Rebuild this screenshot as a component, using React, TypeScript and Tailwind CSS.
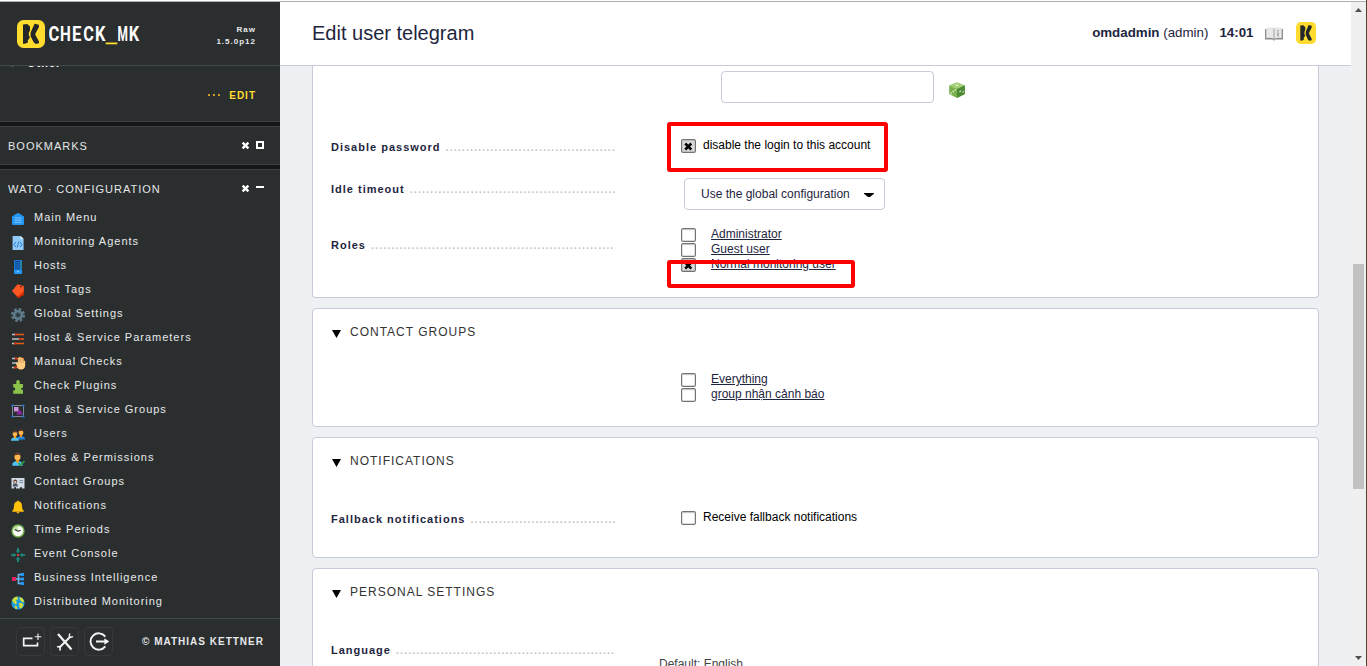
import type { ReactNode } from "react";

/* ---------- logo ---------- */

function LogoMark({ className }: { className: string }) {
  return (
    <svg className={className} viewBox="0 0 28 28" preserveAspectRatio="none">
      <rect width="28" height="28" rx="6.5" fill="#ffdc2e" />
      <path
        d="M6 4.500 10.200 4 13 6.600V10.500L11.800 12.400V15.500L13 17.200 10.800 20.500V22.800L6.600 24 6 23.400Z"
        fill="#232727"
      />
      <path
        d="M17.600 3.800 21.800 4.800 22 7 18.400 13.400V15L22 21.600V23.200L18.800 24 16.800 22.600 13.600 16.200V12.600Z"
        fill="#232727"
      />
    </svg>
  );
}

const LETTERS: [string, number, number][] = [
  ["C", -0.6, 10.8],
  ["H", 11.1, 10.8],
  ["E", 23.1, 9.4],
  ["C", 34.3, 10.6],
  ["K", 45.9, 10.4],
  ["M", 68.5, 10.4],
  ["K", 79.8, 10.4],
];

function WordMark() {
  return (
    <svg className="ml-1 h-7 w-[92px] shrink-0" viewBox="0 0 92 28" fontFamily="Roboto, sans-serif" fontWeight="700" fontSize="20" fill="#ffffff">
      {LETTERS.map(([c, x, w], i) => (
        <text key={i} x={x} y="21.300" textLength={w} lengthAdjust="spacingAndGlyphs">
          {c}
        </text>
      ))}
      <rect x="56.700" y="22.500" width="11.600" height="1.800" fill="#ffdc2e" />
    </svg>
  );
}

/* ---------- sidebar icons ---------- */

const sliders = (
  <>
    <path d="M2 3.500h3M2 8h8M2 12.500h3" stroke="#b9c4c8" strokeWidth="1.600" />
    <path d="M5 3.500h9M10 8h4M5 12.500h9" stroke="#e65c1a" strokeWidth="1.300" />
    <path d="M5 2.500h2v2H5zM9 7h2v2H9zM4 11.500h2v2H4z" fill="#d32f0f" />
  </>
);

const person = (x: number, y: number, body: string) => (
  <g transform={`translate(${x} ${y})`}>
    <path d="M0 11Q0 7.400 4 7.400T8 11Z" fill={body} />
    <path d="M3 5h2v3l-1 1-1-1z" fill="#ff9800" />
    <ellipse cx="4" cy="4" rx="2.300" ry="2.800" fill="#ffb74d" />
    <path d="M1.600 3.600Q1.400.6 4 .6t2.400 3L5.400 2.400 2.600 2.600z" fill="#5a3a30" />
  </g>
);

const ITEMS: [string, ReactNode][] = [
  [
    "Main Menu",
    <>
      <path d="M8 1.800 14 5.600V13a1 1 0 0 1-1 1H3a1 1 0 0 1-1-1V5.600z" fill="#2196f3" />
      <path d="M4.500 7h7M4.500 9.200h7M4.500 11.400h7" stroke="#90caf9" strokeWidth=".9" />
    </>,
  ],
  [
    "Monitoring Agents",
    <>
      <path d="M2.600 1h8l3 3v11h-11z" fill="#90caf9" />
      <path d="M10.600 1v3h3z" fill="#e1f5fe" />
      <path d="M6 7 4 9.500 6 12M10 7l2 2.500L10 12M8.800 6.500l-1.600 6" stroke="#1976d2" strokeWidth=".9" fill="none" />
    </>,
  ],
  [
    "Hosts",
    <>
      <path d="M4 1h8v14H4z" fill="#1976d2" />
      <path d="M4 11h8v4H4z" fill="#2196f3" />
      <path d="M5 2.700h5M5 4.900h5M5 7.100h5M5 9.300h5" stroke="#0d3c70" strokeWidth=".9" />
      <path d="M11 2v8" stroke="#388e7a" strokeWidth="1" />
      <circle cx="8" cy="12.600" r=".8" fill="#bbdefb" />
    </>,
  ],
  [
    "Host Tags",
    <>
      <path d="M7.500 1.200 13.800 3v6L8 14.800 2 8z" fill="#ff5722" />
      <path d="M13.900 8v4L8.400 15 6 12.400 8.500 13z" fill="#d92d06" />
      <circle cx="11" cy="3.600" r=".9" fill="#5d2415" />
    </>,
  ],
  [
    "Global Settings",
    <>
      <circle cx="8" cy="8" r="5.800" fill="none" stroke="#607d8b" strokeWidth="2.400" strokeDasharray="2.550 2.005" />
      <circle cx="8" cy="8" r="5" fill="#607d8b" />
      <circle cx="8" cy="8" r="2.800" fill="#3f5560" />
      <circle cx="8" cy="8" r="1.500" fill="#2b3032" />
    </>,
  ],
  ["Host & Service Parameters", sliders],
  [
    "Manual Checks",
    <>
      {sliders}
      <path
        d="M5.600 7.800Q5.800 6.800 6.800 7.400L7.900 8.600V3.400Q8.500 2.400 9.200 3.300V2.300Q9.900 1.300 10.700 2.300V2.800Q11.500 2 12.200 3V3.900Q13 3.200 13.700 4.200V5.600Q14.600 5 15.200 6V10.200Q15 14.600 10.900 14.600 8.600 14.600 7.400 12.400Z"
        fill="#ffcc80"
      />
      <path d="M9.200 3.800v4M10.700 3.400v4.200M12.200 3.800v4M13.700 5v3" stroke="#b9793a" strokeWidth=".4" />
    </>,
  ],
  [
    "Check Plugins",
    <path
      d="M3.200 5h3.200Q5.600 1 8 1t1.600 4H13v4q-1.800-.6-1.800.8T13 10.800v3.900H3.200v-3.500Q5.200 12 5.200 9.900T3.200 8.600z"
      fill="#8bc34a"
    />,
  ],
  [
    "Host & Service Groups",
    <>
      <rect x="2.500" y="2.500" width="11" height="11" fill="none" stroke="#7b8791" strokeWidth="1" />
      <rect x="4" y="4" width="4.500" height="4.500" fill="#ce93d8" />
      <path d="M9.500 6.500 13 11.500H6z" fill="#8e24aa" />
      <path d="M1.500 1.500h2v2h-2zM12.500 1.500h2v2h-2zM1.500 12.500h2v2h-2zM12.500 12.500h2v2h-2z" fill="#1976d2" />
    </>,
  ],
  [
    "Users",
    <>
      {person(7, 1.5, "#1e88e5")}
      {person(1, 2.8, "#4fc3f7")}
    </>,
  ],
  [
    "Roles & Permissions",
    <>
      <g transform="translate(2.200 .6) scale(1.320 1.280)">{person(0, 0, "#4fc3f7")}</g>
      <path d="m8.500 12 2 2L14.500 10" stroke="#2e9d46" strokeWidth="1.700" fill="none" />
    </>,
  ],
  [
    "Contact Groups",
    <>
      <path d="M1.500 3h13v10.500H12v-1.300h-2v1.300H6v-1.300H4v1.300H1.500z" fill="#cfdae6" />
      <path d="M2.500 11.500 3.500 8.500H7l1 3z" fill="#455a64" />
      <circle cx="5.200" cy="6.500" r="1.900" fill="#5d4037" />
      <circle cx="5.200" cy="7" r="1.100" fill="#ffccbc" />
      <path d="M9.500 5.500H13M9.500 7.500H13" stroke="#78909c" strokeWidth="1" />
    </>,
  ],
  [
    "Notifications",
    <>
      <path d="M7 2.500Q8 .6 9 2.500q3 .6 3 4.500 0 3.500 1.800 5v.8H2.200V12Q4 10.500 4 7q0-3.900 3-4.500z" fill="#ffc107" />
      <path d="M6.500 12.800h3q0 1.700-1.500 1.700t-1.500-1.700z" fill="#f9a825" />
    </>,
  ],
  [
    "Time Periods",
    <>
      <circle cx="8" cy="8" r="6.700" fill="#6cab45" />
      <circle cx="8" cy="8" r="5.300" fill="#f7faf5" />
      <path d="M8 8V2.700A5.300 5.300 0 0 0 3 6.500z" fill="#c5e1a5" />
      <path d="M4.800 6.500 8 8.200l2.600-.8" stroke="#263238" strokeWidth="1.100" fill="none" />
    </>,
  ],
  [
    "Event Console",
    <>
      <path d="M8 1v4M8 11v4M1 8h4M11 8h4" stroke="#1f9688" strokeWidth="1.700" />
      <path d="M5.700 3.600h4.600L8 6.400zM5.700 12.400h4.600L8 9.600zM3.600 5.700v4.600L6.400 8zM12.400 5.700v4.600L9.600 8z" fill="#1b8a7c" />
      <rect x="7" y="7" width="2" height="2" fill="#e53935" />
    </>,
  ],
  [
    "Business Intelligence",
    <>
      <path d="M5 8h7M12 3.500H8.500v9H12" stroke="#6fb2e6" strokeWidth="1.700" fill="none" />
      <rect x="2" y="6" width="3.800" height="4" fill="#e91e63" />
      <path d="M10.500 2h3.500v3h-3.500zM10.500 6.500h3.500v3h-3.500zM10.500 11h3.500v3h-3.500z" fill="#2196f3" />
    </>,
  ],
  [
    "Distributed Monitoring",
    <>
      <circle cx="8" cy="8" r="6.600" fill="#1e9be0" />
      <path d="M2 5.500Q4 1.500 7.500 1.500L8 4 6 5.500 7 8 5.500 9.500 3.500 7.500zM9.500 2 12.500 3.300 14.300 6.500 12.800 7.500 11.500 6.500 10 5zM9 8h3l1.500 2-2 3.500-2-.8zM4.500 10.500 7 11.500 7.200 14.300 5 13.500z" fill="#cddc39" />
    </>,
  ],
];

/* ---------- sidebar ---------- */

function CloseX() {
  return (
    <svg className="h-[7px] w-[7px]" viewBox="0 0 7 7">
      <path d="M.6.6 6.400 6.400M6.400.6.6 6.400" stroke="#fff" strokeWidth="2.400" />
    </svg>
  );
}

function SnapinHead({ title, open }: { title: string; open?: boolean }) {
  return (
    <div className="flex h-3 items-start pl-2 pr-4 text-[11px] leading-[12px] tracking-[1px] text-[#e4e6e7]">
      <span className="grow">{title}</span>
      <span className="mt-[2px]">
        <CloseX />
      </span>
      {open ? (
        <span className="ml-[7px] mt-[3px] h-[2px] w-2 bg-white" />
      ) : (
        <span className="ml-[7px] mt-px h-2 w-2 border-2 border-white" />
      )}
    </div>
  );
}

function FootButton({ children }: { children: ReactNode }) {
  return (
    <button className="flex h-[29px] w-[29px] items-center justify-center rounded-[4px] border border-[#35393b]">
      <svg className="h-[22px] w-[22px] shrink-0" viewBox="0 0 22 22" fill="none" stroke="#f4f4f4">
        {children}
      </svg>
    </button>
  );
}

function Sidebar() {
  return (
    <aside className="flex w-[280px] shrink-0 flex-col bg-[#2a2e2f] text-[#e8e9ea]">
      <div className="flex h-16 shrink-0 border-b border-[#42474a] pl-[17px] pr-6 pt-[18px]">
        <LogoMark className="h-7 w-7 shrink-0" />
        <WordMark />
        <div className="mt-[4px] grow text-right text-[8px] font-bold leading-[12px] tracking-[1px]">
          Raw
          <br />
          1.5.0p12
        </div>
      </div>

      <div className="flex h-14 shrink-0 flex-col overflow-hidden border-b border-[#3b4042]">
        <div className="-mt-[9px] flex h-3 shrink-0 items-end pl-[11px] text-[11px] font-bold leading-[12px] tracking-[1px] text-white">
          <span className="mb-[2px] h-[2px] w-[3px] bg-[#4a5052]" />
          <span className="ml-[13px]">Other</span>
        </div>
        <div className="mt-[21px] flex justify-end pr-6 text-[10px] font-bold leading-[11px] tracking-[1px] text-[#ffdc2e]">
          <span className="mr-[9px] flex gap-[3px] pt-[4px]">
            <i className="h-[2px] w-[2px] bg-[#d69a24]" />
            <i className="h-[2px] w-[2px] bg-[#d69a24]" />
            <i className="h-[2px] w-[2px] bg-[#d69a24]" />
          </span>
          EDIT
        </div>
      </div>
      <div className="h-1 shrink-0 bg-[#141617]" />
      <div className="h-[39px] shrink-0 border-y border-[#3b4042] pt-[13px]">
        <SnapinHead title="BOOKMARKS" />
      </div>
      <div className="h-1 shrink-0 bg-[#141617]" />
      <div className="grow border-t border-[#3b4042] pt-[13px]">
        <SnapinHead title="WATO · CONFIGURATION" open />
        <ul className="mt-[10px]">
          {ITEMS.map(([label, icon]) => (
            <li key={label} className="flex h-6 items-start pl-[10px] text-[11px] leading-[24px] tracking-[1px]">
              <svg className="mt-[6px] h-4 w-4 shrink-0" viewBox="0 0 16 16">
                {icon}
              </svg>
              <span className="ml-2 whitespace-nowrap">{label}</span>
            </li>
          ))}
        </ul>
      </div>
      <footer className="flex h-12 shrink-0 items-start gap-[5px] border-t border-[#42474a] pl-4 pt-2">
        <FootButton>
          <path d="M12.500 7.400H3.700V14.700H17.500V11.500" strokeWidth="1.700" />
          <path d="M18 2.500v6.500M14.800 5.700H21.300" strokeWidth="1.100" />
        </FootButton>
        <FootButton>
          <path d="M4 3 17.500 18.500" strokeWidth="2.200" />
          <path d="M16.500 5.500 5 17" strokeWidth="2" />
          <path d="M15.800 2.500Q14.500 6.500 16.500 6.200T19 5.500M3 16Q6 14.500 6.300 16.500T5.500 19.500" strokeWidth="1.400" />
        </FootButton>
        <FootButton>
          <path d="M17.300 5.600A8.200 8.200 0 1 0 17.300 15.400M8 10.500h11.500" strokeWidth="1.900" />
          <path d="M16.400 7.300 21.200 10.500 16.400 13.700z" fill="#f4f4f4" stroke="none" />
        </FootButton>
        <span className="ml-[24px] mt-[9px] whitespace-nowrap text-[10px] font-bold leading-[11px] tracking-[1px]">
          © MATHIAS KETTNER
        </span>
      </footer>
    </aside>
  );
}

/* ---------- form ---------- */

function Checkbox({ checked, className }: { checked?: boolean; className: string }) {
  return (
    <svg className={`h-[14px] w-[15px] shrink-0 ${className}`} viewBox="0 0 15 14">
      <rect x=".6" y=".6" width="13.800" height="12.800" rx="1.500" fill={checked ? "#d9d9d9" : "#fff"} stroke="#727272" strokeWidth="1.200" />
      <path d="M1.500 1.700h12" stroke="#bdbdbd" strokeWidth=".8" />
      {checked && <path d="M4.200 4.500 10.300 10.700M10.300 4.500 4.200 10.700" stroke="#000" strokeWidth="2.600" />}
    </svg>
  );
}

function Label({ text, dots, className }: { text: string; dots: number; className: string }) {
  return (
    <div className={`h-3 whitespace-nowrap text-[11px] font-bold leading-[12px] tracking-[1px] text-[#1e2540] ${className}`}>
      {text} <span className="ml-px text-[#c4c4c4]">{".".repeat(dots)}</span>
    </div>
  );
}

function Options({ items, className }: { items: [string, boolean][]; className: string }) {
  return (
    <div className={className}>
      {items.map(([name, on]) => (
        <div key={name} className="flex h-[15px] items-start leading-[15px]">
          <Checkbox checked={on} className="mt-px" />
          <a className="ml-[15px] whitespace-nowrap text-[#1e2540] underline">{name}</a>
        </div>
      ))}
    </div>
  );
}

const ROW = "grid grid-cols-[350px_1fr] items-start pl-[18px]";

function PanelTitle({ children }: { children: string }) {
  return (
    <h2 className="flex h-[30px] items-start pl-[19px] pt-4 leading-[14px] tracking-[1px] text-[#333]">
      <svg className="mr-[9px] mt-[5px] h-2 w-[9px]" viewBox="0 0 9 8">
        <path d="M0 0h9L4.500 8z" fill="#000" />
      </svg>
      {children}
    </h2>
  );
}

function Dice() {
  return (
    <svg className="ml-[15px] mt-4 h-4 w-4" viewBox="0 0 16 16">
      <path d="M8 0.500 15.800 3.500V12L8 16 .2 12V3.500z" fill="#7ab04c" />
      <path d="M8 .5 15.800 3.500 8 7 .2 3.500z" fill="#a5d175" />
      <path d="M8 7 15.800 3.500V12L8 16z" fill="#4c8a35" />
      <path d="M7 2.800h2v1.200H7zM1.500 10l1.300.7v1.500l-1.300-.7zM3.600 8.500l1.300.6v1.400l-1.300-.6zM5.500 7l1.200.6V9l-1.200-.6zM10.500 9l1.300-.7v1.500l-1.300.7zM13.500 9.500l1.200-.7v1.400l-1.200.6z" fill="#eef8e2" />
    </svg>
  );
}

function Content() {
  return (
    <main className="flex grow flex-col overflow-hidden bg-[#edf1f4] pl-8 pr-8 text-[12px]">
      <section className="h-[232px] shrink-0 rounded-b-[4px] border border-t-0 border-[#c8cad9] bg-white">
        <div className={`${ROW} h-14`}>
          <span />
          <div className="flex items-start pl-10">
            <div className="mt-[5px] h-8 w-[213px] rounded-[4px] border border-[#c8cad9] bg-white" />
            <Dice />
          </div>
        </div>
        <div className={`${ROW} h-[50px]`}>
          <Label text="Disable password" dots={42} className="mt-[19px]" />
          <div className="flex items-start leading-[14px] text-black">
            <Checkbox checked className="mt-[17px]" />
            <span className="ml-[7px] mt-4">disable the login to this account</span>
          </div>
        </div>
        <div className={`${ROW} h-[49px]`}>
          <Label text="Idle timeout" dots={51} className="mt-[11px]" />
          <div className="ml-[3px] mt-[6px] flex h-8 w-[201px] items-start justify-between rounded-[4px] border border-[#c8cad9] pl-4 pr-[10px] leading-[14px] text-[#1e2540]">
            <span className="mt-2">Use the global configuration</span>
            <svg className="mt-[14px] h-1 w-[10px]" viewBox="0 0 10 4">
              <path d="M0 0h10v.8L6 4H4L0 .8z" fill="#000" />
            </svg>
          </div>
        </div>
        <div className={`${ROW} h-[76px]`}>
          <Label text="Roles" dots={60} className="mt-[18px]" />
          <Options
            className="mt-[6px]"
            items={[
              ["Administrator", false],
              ["Guest user", false],
              ["Normal monitoring user", true],
            ]}
          />
        </div>
      </section>

      <section className="mt-[10px] h-[119px] shrink-0 rounded-[4px] border border-[#c8cad9] bg-white">
        <PanelTitle>CONTACT GROUPS</PanelTitle>
        <div className={ROW}>
          <span />
          <Options
            className="mt-[33px]"
            items={[
              ["Everything", false],
              ["group nhận cảnh báo", false],
            ]}
          />
        </div>
      </section>

      <section className="mt-[10px] h-[121px] shrink-0 rounded-[4px] border border-[#c8cad9] bg-white">
        <PanelTitle>NOTIFICATIONS</PanelTitle>
        <div className={ROW}>
          <Label text="Fallback notifications" dots={36} className="mt-[45px]" />
          <div className="flex items-start leading-[14px] text-black">
            <Checkbox className="mt-[43px]" />
            <span className="ml-[7px] mt-[42px]">Receive fallback notifications</span>
          </div>
        </div>
      </section>

      <section className="mt-[10px] h-[121px] shrink-0 rounded-[4px] border border-[#c8cad9] bg-white">
        <PanelTitle>PERSONAL SETTINGS</PanelTitle>
        <div className={ROW}>
          <Label text="Language" dots={54} className="mt-[45px]" />
          <span className="-ml-[22px] mt-[58px] leading-[14px] text-[#444]">Default: English</span>
        </div>
      </section>
    </main>
  );
}

function TopBar() {
  return (
    <header className="flex h-16 shrink-0 items-start border-b border-[#c8cad9] bg-white pl-8 pr-[35px] text-[#1e2540]">
      <h1 className="mt-5 grow text-[20px] leading-[22px]">Edit user telegram</h1>
      <div className="mt-[23px] flex text-[13.330px] leading-[15px]">
        <span>
          <b>omdadmin</b> (admin)
        </span>
        <b className="ml-[11px]">14:01</b>
      </div>
      <svg className="ml-[11.500px] mt-[25px] h-[14px] w-[18px]" viewBox="0 0 18 14">
        <path d="M0 2h18v10.500H10.500L9 13.800 7.500 12.500H0z" fill="#8e8e8e" />
        <path d="M1.300.8Q5-.3 8.700 1v10.500Q5 10.300 1.300 11zM16.700.8Q13-.3 9.300 1v10.500q3.700-1.200 7.400-.5z" fill="#e8e8e8" />
        <path d="M9 1v11.500" stroke="#bdbdbd" />
        <path d="M13 3v1.400M13 5.400v3.800" stroke="#999" strokeWidth="1.400" />
      </svg>
      <LogoMark className="ml-[13px] mt-[20px] h-[22px] w-[20px]" />
    </header>
  );
}

function Scrollbar() {
  return (
    <div className="flex w-[15px] shrink-0 flex-col items-center bg-[#f0f0f0]">
      <svg className="mt-[6px] h-1 w-[7px] shrink-0" viewBox="0 0 7 4">
        <path d="M3.500 0 7 4H0z" fill="#505050" />
      </svg>
      <div className="mt-[252px] h-[225px] w-[11px] shrink-0 bg-[#c1c1c1]" />
      <svg className="mt-[167px] h-1 w-[7px] shrink-0" viewBox="0 0 7 4">
        <path d="M3.500 4 7 0H0z" fill="#505050" />
      </svg>
    </div>
  );
}

export default function App() {
  return (
    <div className="relative flex h-[666px] w-[1367px] overflow-hidden bg-white font-['Liberation_Sans',Arial,sans-serif]">
      <div className="flex grow flex-col">
        <div className="h-[2px] shrink-0 border-b border-[#b0b0b0] bg-white" />
        <div className="flex min-h-0 grow">
          <Sidebar />
          <div className="flex min-w-0 grow flex-col">
            <TopBar />
            <Content />
          </div>
          <Scrollbar />
        </div>
      </div>
      <div className="w-px shrink-0 bg-[#4b4728]" />
      <div className="absolute left-[667px] top-[122px] h-[50px] w-[221px] rounded-[3px] border-4 border-[#ff0000]" />
      <div className="absolute left-[667px] top-[260px] h-[28px] w-[188px] rounded-[3px] border-4 border-[#ff0000]" />
    </div>
  );
}
